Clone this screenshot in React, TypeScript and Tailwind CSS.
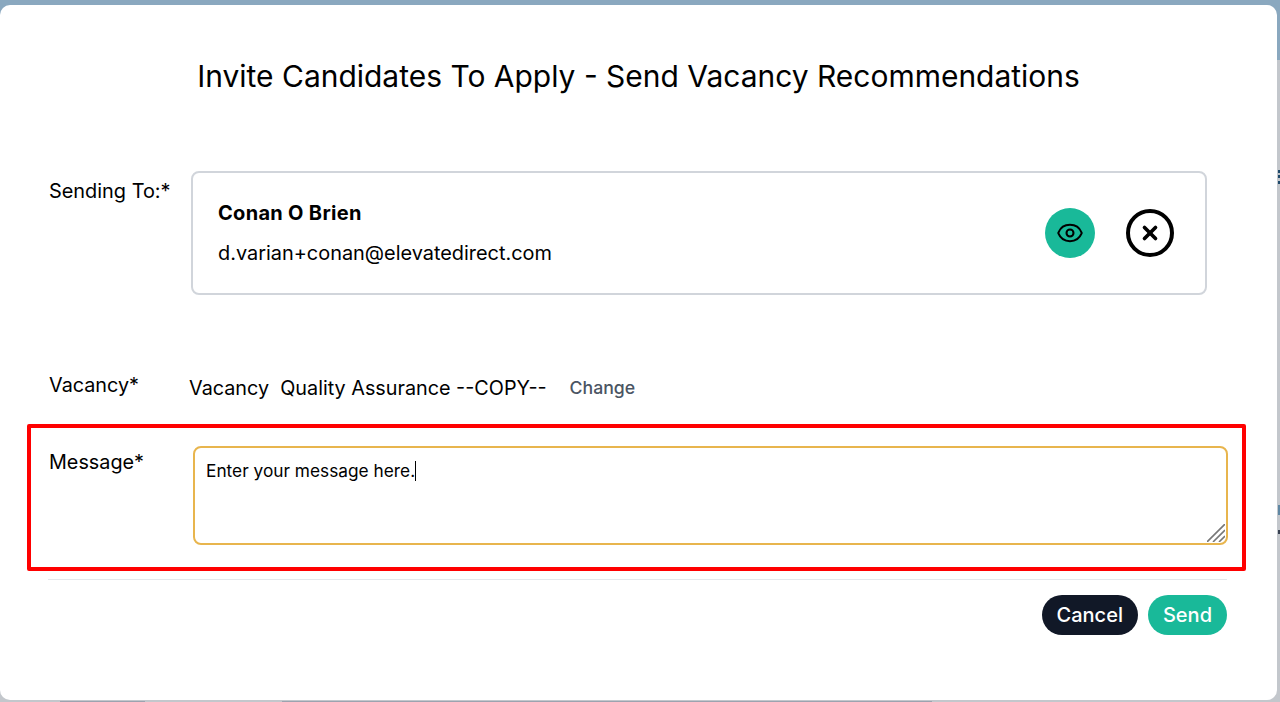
import { Eye, X } from "lucide-react";

// page behind the modal, only slivers of it are visible
function Backdrop() {
  return (
    <div className="absolute inset-0 bg-[#c3c7cc]">
      <div className="h-[60px] bg-[#8aa8bf]" />
      <div className="absolute top-[170px] right-0 h-[3px] w-[2px] bg-[#1f4a6b]" />
      <div className="absolute top-[175px] right-0 h-[3px] w-[2px] bg-[#1f4a6b]" />
      <div className="absolute top-[181px] right-0 h-[3px] w-[2px] bg-[#1f4a6b]" />
      <div className="absolute top-[505px] right-0 h-[10px] w-[2px] bg-[#5f87a3]" />
      <div className="absolute top-[530px] right-0 h-[4px] w-[2px] bg-[#374151]" />
      <div className="absolute bottom-0 left-[60px] h-px w-[85px] bg-[#9ca3af]" />
      <div className="absolute bottom-0 left-[282px] h-px w-[650px] bg-[#9ca3af]" />
    </div>
  );
}

export default function App() {
  return (
    <div className="relative h-[702px] w-[1280px] overflow-hidden font-['Inter',sans-serif] text-black">
      <Backdrop />
      <div className="relative top-[5px] flex h-[695px] w-[1277px] flex-col rounded-[10px] bg-white">
        <h1 className="mt-[51px] h-[40px] text-center text-[29.98px] leading-[40px] font-normal">
          Invite Candidates To Apply - Send Vacancy Recommendations
        </h1>

        <div className="mt-[75px] flex pl-[49px]">
          <div className="w-[142px] pt-[6px] text-[19.9px] leading-7">Sending To:*</div>
          <div className="flex h-[124px] w-[1016px] items-center justify-between rounded-lg border-2 border-[#d1d5db] pr-[31px] pl-[25px]">
            <div>
              <div className="text-xl leading-7 font-bold tracking-[0.3px]">Conan O Brien</div>
              <div className="mt-[12px] text-[19.9px] leading-7">d.varian+conan@elevatedirect.com</div>
            </div>
            <div className="flex items-center gap-[30px]">
              <button className="flex h-[50px] w-[50px] translate-x-px items-center justify-center rounded-full bg-[#19b999]">
                <Eye size={28} strokeWidth={1.75} />
              </button>
              <button className="flex h-[50px] w-[50px] items-center justify-end rounded-full">
                <span className="flex h-[48px] w-[48px] items-center justify-center rounded-full border-[4px] border-black">
                  <X size={22} strokeWidth={4} />
                </span>
              </button>
            </div>
          </div>
        </div>

        <div className="mt-[76px] flex h-[28px] pl-[49px]">
          <div className="w-[140px] text-[19.8px] leading-7">Vacancy*</div>
          <div className="flex items-center pt-[6px] text-[19.8px] leading-7">
            <span className="whitespace-pre">Vacancy  Quality Assurance --COPY--</span>
            <span className="ml-[23px] text-[17.7px] font-medium text-[#4b5563]">Change</span>
          </div>
        </div>

        <div className="mt-[25px] ml-[27px] flex h-[147px] w-[1219px] rounded-[2px] border-4 border-[#ff0000] pt-[18px] pl-[18px]">
          <div className="w-[144px] pt-[2px] text-[19.8px] leading-7">Message*</div>
          <div className="relative h-[99px] w-[1035px] rounded-lg border-2 border-[#e8b54d] px-[11px] py-[9px] text-[17.3px] leading-[23px]">
            Enter your message here.
            <span className="inline-block h-[20px] w-px translate-y-[4px] bg-black" />
            <svg className="absolute right-[1px] bottom-[1px] h-[18px] w-[18px]" viewBox="0 0 18 18" fill="none" stroke="#777" strokeWidth="1.6">
              <path d="M0 18 18 0M6 18 18 6M12 18 18 12" />
            </svg>
          </div>
        </div>

        <div className="mt-[8px] ml-[48px] h-px w-[1179px] bg-[#e5e7eb]" />

        <div className="mt-[15px] mr-[50px] flex justify-end gap-[10px]">
          <button className="h-[40px] rounded-full bg-[#111827] px-[15px] text-xl font-medium text-white">
            Cancel
          </button>
          <button className="h-[40px] rounded-full bg-[#19b999] px-[15px] text-xl font-medium text-white">
            Send
          </button>
        </div>
      </div>
    </div>
  );
}
